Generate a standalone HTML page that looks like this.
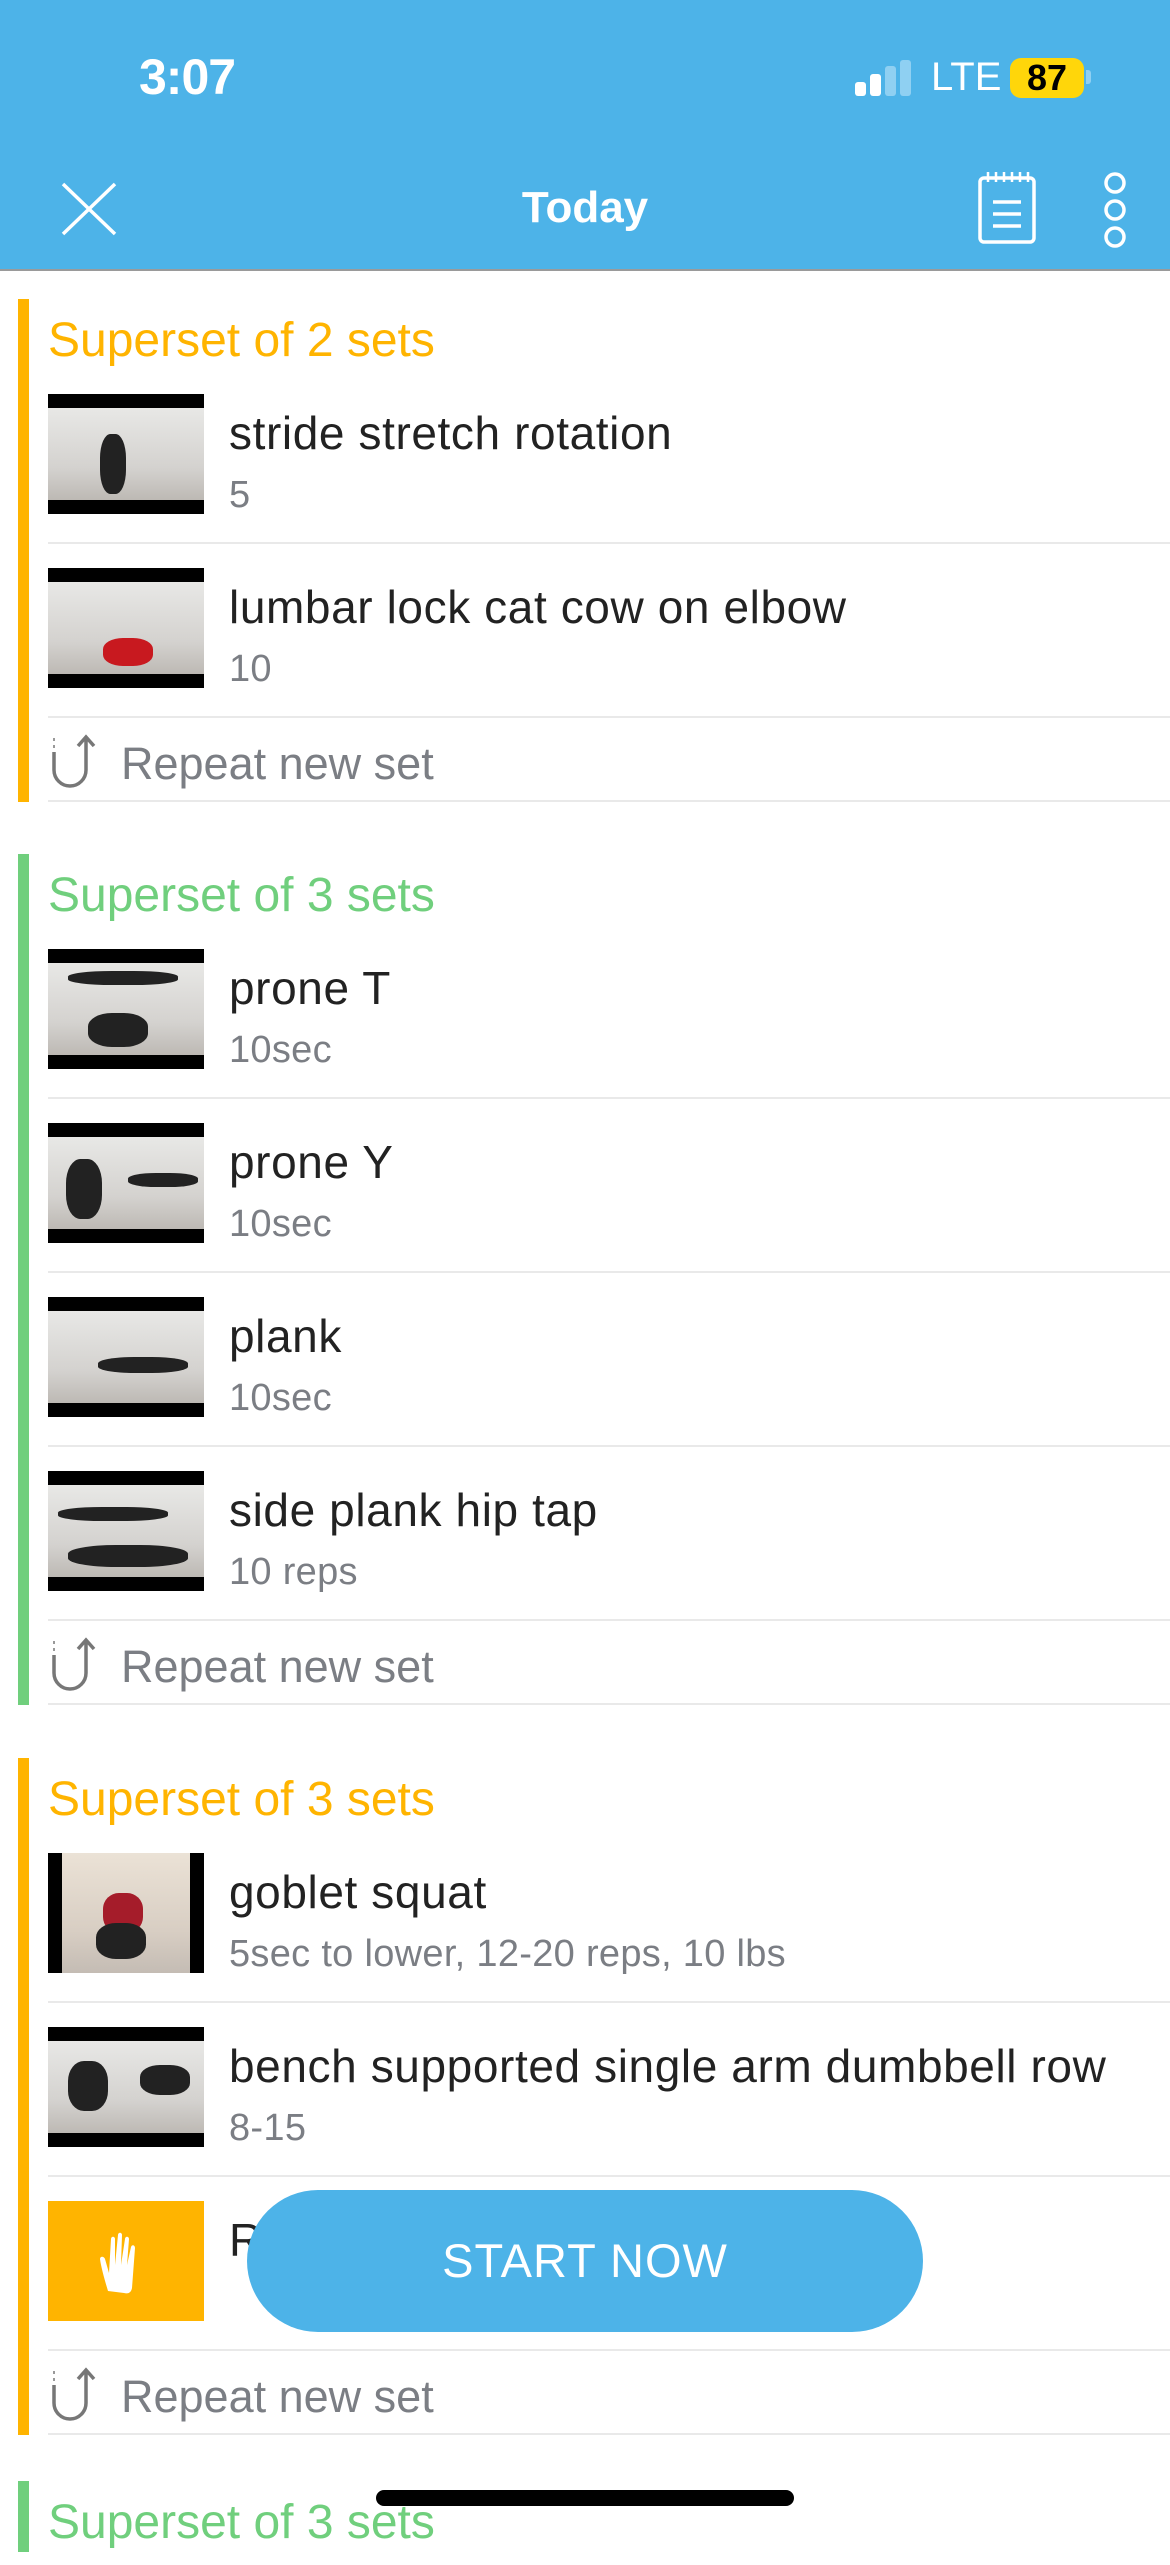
<!DOCTYPE html>
<html><head><meta charset="utf-8"><style>
*{margin:0;padding:0;box-sizing:border-box}
body{width:1170px;height:2532px;overflow:hidden;background:#fff;font-family:"Liberation Sans",sans-serif;position:relative}
.top{position:absolute;left:0;top:0;width:1170px;height:271px;background:#4DB3E8;border-bottom:2px solid #9a9a9a}
.time{position:absolute;left:139px;top:48px;font-size:50px;font-weight:bold;color:#fff;letter-spacing:-1px}
.title{position:absolute;left:0;width:1170px;text-align:center;top:183px;font-size:44px;font-weight:bold;color:#fff}
.sec{position:absolute;left:0;width:1170px}
.bar{position:absolute;left:18px;top:0;width:11px;bottom:0}
.hdr{height:71px;padding-left:48px;font-size:48px;line-height:84px}
.row{height:174px;margin-left:48px;border-bottom:2px solid #e9e9e9;position:relative}
.th{position:absolute;left:0;top:24px;width:156px;height:120px;background:#000;overflow:hidden}
.th i{position:absolute;left:0;right:0;top:14px;bottom:14px;background:linear-gradient(180deg,#e8e8e6,#d4d2cf 65%,#bdb9b4)}
.th b{position:absolute;background:#222;border-radius:40%}
.t1{position:absolute;left:181px;top:36px;font-size:46px;letter-spacing:0.6px;color:#222;white-space:nowrap}
.t2{position:absolute;left:181px;top:104px;font-size:38px;letter-spacing:0.3px;color:#7b7e84;white-space:nowrap}
.rep{height:84px;margin-left:48px;border-bottom:2px solid #e9e9e9;position:relative}
.rep span{position:absolute;left:73px;top:20px;font-size:45px;color:#7b7e84}
.rep svg{position:absolute;left:0;top:16px}
.btn{position:absolute;left:247px;top:2190px;width:676px;height:142px;border-radius:71px;background:#4DB3E8;color:#fff;font-size:47px;text-align:center;line-height:142px;letter-spacing:1px}
.home{position:absolute;left:376px;top:2490px;width:418px;height:16px;border-radius:8px;background:#000}
</style></head><body>
<div class="top">
 <div class="time">3:07</div>
 <svg style="position:absolute;left:855px;top:60px" width="60" height="36"><rect x="0" y="22" width="11" height="14" rx="3" fill="#fff"/><rect x="15" y="14" width="11" height="22" rx="3" fill="#fff"/><rect x="30" y="6" width="11" height="30" rx="3" fill="#8fd0f2"/><rect x="45" y="0" width="11" height="36" rx="3" fill="#8fd0f2"/></svg>
 <div style="position:absolute;left:931px;top:55px;font-size:40px;color:#fff">LTE</div>
 <div style="position:absolute;left:1010px;top:58px;width:74px;height:40px;border-radius:11px;background:#FFD60A;color:#000;font-weight:bold;font-size:36px;text-align:center;line-height:40px">87</div>
 <div style="position:absolute;left:1086px;top:70px;width:5px;height:14px;border-radius:0 3px 3px 0;background:#8fd0f2"></div>
 <svg style="position:absolute;left:60px;top:181px" width="58" height="56"><path d="M3 3L55 53M55 3L3 53" stroke="#fff" stroke-width="3.5"/></svg>
 <div class="title">Today</div>
 <svg style="position:absolute;left:976px;top:168px" width="62" height="78"><rect x="4" y="10" width="54" height="64" rx="4" fill="none" stroke="#fff" stroke-width="3.5"/><path d="M12 4v10M20 4v10M28 4v10M36 4v10M44 4v10M52 4v10" stroke="#fff" stroke-width="2.5"/><path d="M17 34h28M17 46h28M17 58h28" stroke="#fff" stroke-width="3.5"/></svg>
 <svg style="position:absolute;left:1100px;top:168px" width="30" height="84"><circle cx="15" cy="15" r="9" fill="none" stroke="#fff" stroke-width="3.5"/><circle cx="15" cy="42" r="9" fill="none" stroke="#fff" stroke-width="3.5"/><circle cx="15" cy="69" r="9" fill="none" stroke="#fff" stroke-width="3.5"/></svg>
</div>

<div class="sec" style="top:299px">
 <div class="bar" style="background:#FFB400"></div>
 <div class="hdr" style="color:#FFB400">Superset of 2 sets</div>
 <div class="row"><div class="th"><i></i><b style="left:52px;top:40px;width:26px;height:60px"></b></div><div class="t1">stride stretch rotation</div><div class="t2">5</div></div>
 <div class="row"><div class="th"><i></i><b style="left:55px;top:70px;width:50px;height:28px;background:#c8191f"></b></div><div class="t1">lumbar lock cat cow on elbow</div><div class="t2">10</div></div>
 <div class="rep"><svg width="50" height="56"><path d="M6 4v3M6 11v3" stroke="#999" stroke-width="2"/><path d="M6 18v18a16 16 0 0 0 32 0V4M30 12l8-9 8 9" fill="none" stroke="#777" stroke-width="3.5"/></svg><span>Repeat new set</span></div>
</div>

<div class="sec" style="top:854px">
 <div class="bar" style="background:#70CF7D"></div>
 <div class="hdr" style="color:#70CF7D">Superset of 3 sets</div>
 <div class="row"><div class="th"><i></i><b style="left:20px;top:22px;width:110px;height:14px"></b><b style="left:40px;top:64px;width:60px;height:34px"></b></div><div class="t1">prone T</div><div class="t2">10sec</div></div>
 <div class="row"><div class="th"><i></i><b style="left:18px;top:36px;width:36px;height:60px"></b><b style="left:80px;top:50px;width:70px;height:14px"></b></div><div class="t1">prone Y</div><div class="t2">10sec</div></div>
 <div class="row"><div class="th"><i></i><b style="left:50px;top:60px;width:90px;height:16px"></b></div><div class="t1">plank</div><div class="t2">10sec</div></div>
 <div class="row"><div class="th"><i></i><b style="left:10px;top:36px;width:110px;height:14px"></b><b style="left:20px;top:74px;width:120px;height:22px"></b></div><div class="t1">side plank hip tap</div><div class="t2">10 reps</div></div>
 <div class="rep"><svg width="50" height="56"><path d="M6 4v3M6 11v3" stroke="#999" stroke-width="2"/><path d="M6 18v18a16 16 0 0 0 32 0V4M30 12l8-9 8 9" fill="none" stroke="#777" stroke-width="3.5"/></svg><span>Repeat new set</span></div>
</div>

<div class="sec" style="top:1758px">
 <div class="bar" style="background:#FFB400"></div>
 <div class="hdr" style="color:#FFB400">Superset of 3 sets</div>
 <div class="row"><div class="th"><i style="top:0;bottom:0;left:14px;right:14px;background:linear-gradient(180deg,#ebe2d6,#d8cec3 65%,#c4bcb4)"></i><b style="left:55px;top:40px;width:40px;height:40px;background:#a51c2a"></b><b style="left:48px;top:70px;width:50px;height:36px"></b></div><div class="t1">goblet squat</div><div class="t2">5sec to lower, 12-20 reps, 10 lbs</div></div>
 <div class="row"><div class="th"><i></i><b style="left:20px;top:34px;width:40px;height:50px"></b><b style="left:92px;top:38px;width:50px;height:30px"></b></div><div class="t1">bench supported single arm dumbbell row</div><div class="t2">8-15</div></div>
 <div class="row"><div class="th" style="background:#FFB400"><svg style="position:absolute;left:46px;top:28px" width="60" height="70"><path d="M14 62c-3-10-7-24-8-32 0-3 4-3 5 0l4 14 2-34c0-3 4-3 4 0l0 26 3-30c0-3 4-3 4 0l-1 30 4-26c0-3 4-3 4 0l-2 26 4-18c1-3 4-2 4 1l-3 40c-1 5-4 6-8 5z" fill="#fff"/></svg></div><div class="t1">Rest</div><div class="t2"></div></div>
 <div class="rep"><svg width="50" height="56"><path d="M6 4v3M6 11v3" stroke="#999" stroke-width="2"/><path d="M6 18v18a16 16 0 0 0 32 0V4M30 12l8-9 8 9" fill="none" stroke="#777" stroke-width="3.5"/></svg><span>Repeat new set</span></div>
</div>

<div class="sec" style="top:2481px">
 <div class="bar" style="background:#70CF7D"></div>
 <div class="hdr" style="color:#70CF7D">Superset of 3 sets</div>
</div>

<div class="btn">START NOW</div>
<div class="home"></div>
</body></html>
